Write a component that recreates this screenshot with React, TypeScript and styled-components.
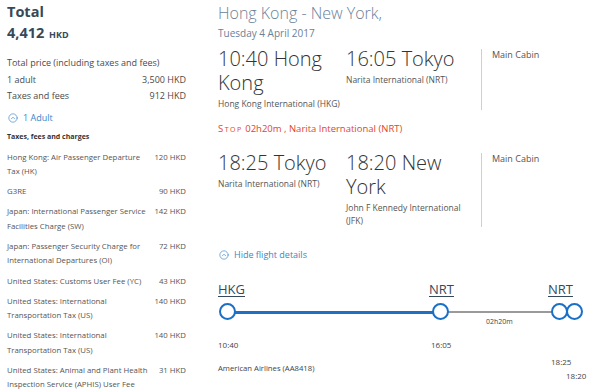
import React from "react";
import styled, { createGlobalStyle } from "styled-components";
import { CircleChevronUp } from "lucide-react";

const GlobalStyle = createGlobalStyle`
    html, body {
        margin: 0;
        padding: 0;
        background: #fff;
    }
    body {
        font-family: "Open Sans", "Noto Sans", sans-serif;
        color: #444;
        width: 600px;
        height: 390px;
        overflow: hidden;
    }
`

interface IFee {
    label: string,
    amount: string
}

const fees: IFee[] = [
    { label: "Hong Kong: Air Passenger Departure Tax (HK)", amount: "120 HKD" },
    { label: "G3RE", amount: "90 HKD" },
    { label: "Japan: International Passenger Service Facilities Charge (SW)", amount: "142 HKD" },
    { label: "Japan: Passenger Security Charge for International Departures (OI)", amount: "72 HKD" },
    { label: "United States: Customs User Fee (YC)", amount: "43 HKD" },
    { label: "United States: International Transportation Tax (US)", amount: "140 HKD" },
    { label: "United States: International Transportation Tax (US)", amount: "140 HKD" },
    { label: "United States: Animal and Plant Health Inspection Service (APHIS) User Fee", amount: "31 HKD" },
]

interface ISegment {
    depart: string,
    departAirport: string,
    arrive: string,
    arriveAirport: string
}

const segments: ISegment[] = [
    { depart: "10:40 Hong Kong", departAirport: "Hong Kong International (HKG)", arrive: "16:05 Tokyo", arriveAirport: "Narita International (NRT)" },
    { depart: "18:25 Tokyo", departAirport: "Narita International (NRT)", arrive: "18:20 New York", arriveAirport: "John F Kennedy International (JFK)" },
]

const Segment: React.FC<{ segment: ISegment }> = ({ segment }) => (
    <SegmentRow>
        <Place>
            <PlaceTime>{segment.depart}</PlaceTime>
            <Airport>{segment.departAirport}</Airport>
        </Place>
        <Place>
            <PlaceTime>{segment.arrive}</PlaceTime>
            <Airport>{segment.arriveAirport}</Airport>
        </Place>
        <Cabin>Main Cabin</Cabin>
    </SegmentRow>
)

const App: React.FC = () => {
    return (
        <>
            <GlobalStyle />
            <Page>
                <Summary>
                    <TotalTitle>Total</TotalTitle>
                    <TotalAmount>4,412 <small>HKD</small></TotalAmount>
                    <PriceBlock>
                        <div>Total price (including taxes and fees)</div>
                        <PriceRow><span>1 adult</span><span>3,500 HKD</span></PriceRow>
                        <PriceRow><span>Taxes and fees</span><span>912 HKD</span></PriceRow>
                    </PriceBlock>
                    <Toggle>
                        <CircleChevronUp size={10} strokeWidth={1.6} />
                        1 Adult
                    </Toggle>
                    <FeesTitle>Taxes, fees and charges</FeesTitle>
                    <FeeList>
                        {fees.map((fee, i) => (
                            <FeeRow key={i}>
                                <span>{fee.label}</span>
                                <FeeAmount>{fee.amount}</FeeAmount>
                            </FeeRow>
                        ))}
                    </FeeList>
                </Summary>

                <Details>
                    <Route>Hong Kong - New York,</Route>
                    <RouteDate>Tuesday 4 April 2017</RouteDate>
                    <Segment segment={segments[0]} />
                    <Stop>
                        <StopWord>Stop</StopWord> 02h20m , Narita International (NRT)
                    </Stop>
                    <Segment segment={segments[1]} />
                    <HideLink>
                        <CircleChevronUp size={10} strokeWidth={1.6} />
                        Hide flight details
                    </HideLink>
                    <Timeline>
                        <Code x={0}>HKG</Code>
                        <Code x={211}>NRT</Code>
                        <Code x={330}>NRT</Code>
                        <Line x={10} w={205} color="#1f6fc5" h={3} />
                        <Line x={230} w={108} color="#9a9a9a" h={2} />
                        <Node x={1} />
                        <Node x={214} />
                        <Node x={333} />
                        <Node x={348} />
                        <Stopover>02h20m</Stopover>
                        <Time x={0} y={58}>10:40</Time>
                        <Time x={213} y={58}>16:05</Time>
                        <Time x={333} y={75}>18:25</Time>
                        <Time x={348} y={89}>18:20</Time>
                        <Carrier>American Airlines (AA8418)</Carrier>
                    </Timeline>
                </Details>
            </Page>
        </>
    )
}

const Page = styled.div`
    display: grid;
    grid-template-columns: 179px 1fr;
    column-gap: 32px;
    padding: 0 0 0 7px;
    height: 390px;
    overflow: hidden;
`

const Summary = styled.div`
    display: flex;
    flex-direction: column;
    font-size: 9px;
    color: #4a4a4a;
`

const TotalTitle = styled.div`
    font-size: 14.5px;
    font-weight: 700;
    color: #36495a;
    line-height: 20px;
    margin-top: 2px;
`

const TotalAmount = styled.div`
    font-size: 14.5px;
    font-weight: 700;
    color: #36495a;
    line-height: 20px;
    margin-top: 1px;

    small {
        font-size: 9px;
        margin-left: 1px;
    }
`

const PriceBlock = styled.div`
    display: flex;
    flex-direction: column;
    margin-top: 10px;
    line-height: 16.5px;
`

const PriceRow = styled.div`
    display: flex;
    justify-content: space-between;
`

const Toggle = styled.div`
    display: flex;
    align-items: center;
    gap: 5px;
    margin-top: 6px;
    font-size: 9px;
    color: #3a86c8;
    line-height: 14px;
    padding-left: 1px;
`

const FeesTitle = styled.div`
    font-size: 7px;
    font-weight: 700;
    color: #333;
    margin-top: 6px;
    line-height: 12px;
`

const FeeList = styled.div`
    display: flex;
    flex-direction: column;
    gap: 6px;
    margin-top: 7px;
`

const FeeRow = styled.div`
    display: grid;
    grid-template-columns: 145px 1fr;
    font-size: 7.8px;
    line-height: 14.3px;
    color: #555;
`

const FeeAmount = styled.span`
    text-align: right;
`

const Details = styled.div`
    display: flex;
    flex-direction: column;
    padding-top: 3px;
`

const Route = styled.div`
    font-size: 16px;
    font-weight: 300;
    color: #6b8198;
    line-height: 21px;
`

const RouteDate = styled.div`
    font-size: 10px;
    color: #6b8198;
    line-height: 13px;
    margin: 3px 0 7px;
`

const SegmentRow = styled.div`
    display: grid;
    grid-template-columns: 128px 135px 1fr;
`

const Place = styled.div`
    display: flex;
    flex-direction: column;
    padding-right: 2px;
`

const PlaceTime = styled.div`
    font-size: 20px;
    font-weight: 300;
    color: #333;
    line-height: 24px;
`

const Airport = styled.div`
    font-size: 8.5px;
    color: #555;
    line-height: 13px;
    margin-top: 2px;
`

const Cabin = styled.div`
    border-left: 1px solid #cfcfcf;
    padding-left: 10px;
    font-size: 9px;
    color: #555;
    line-height: 11px;
    margin-top: 2px;
`

const Stop = styled.div`
    color: #e2452c;
    font-size: 9.5px;
    line-height: 12px;
    margin: 13px 0 16px;
`

const StopWord = styled.span`
    font-variant: small-caps;
    letter-spacing: 1.5px;
    text-transform: capitalize;
`

const HideLink = styled.div`
    display: flex;
    align-items: center;
    gap: 5px;
    color: #3a86c8;
    font-size: 9px;
    line-height: 12px;
    margin-top: 22px;
    padding-left: 1px;
`

const Timeline = styled.div`
    position: relative;
    height: 120px;
    margin-top: 20px;
`

const Code = styled.div<{ x: number }>`
    position: absolute;
    left: ${(p) => p.x}px;
    top: 0;
    font-size: 13px;
    color: #36495a;
    text-decoration: underline;
    text-underline-offset: 2px;
    text-decoration-thickness: 1px;
    line-height: 16px;
`

const Line = styled.div<{ x: number, w: number, h: number, color: string }>`
    position: absolute;
    left: ${(p) => p.x}px;
    width: ${(p) => p.w}px;
    top: ${(p) => 31 - p.h / 2}px;
    height: ${(p) => p.h}px;
    background: ${(p) => p.color};
`

const Node = styled.div<{ x: number }>`
    position: absolute;
    left: ${(p) => p.x}px;
    top: 22px;
    width: 13px;
    height: 13px;
    border: 2.5px solid #1a6fc6;
    border-radius: 50%;
    background: #fff;
`

const Stopover = styled.div`
    position: absolute;
    left: 268px;
    top: 36px;
    font-size: 7px;
    color: #444;
`

const Time = styled.div<{ x: number, y: number }>`
    position: absolute;
    left: ${(p) => p.x}px;
    top: ${(p) => p.y}px;
    font-size: 8px;
    color: #444;
`

const Carrier = styled.div`
    position: absolute;
    left: 0;
    top: 82px;
    font-size: 7.7px;
    color: #444;
`

export default App;
